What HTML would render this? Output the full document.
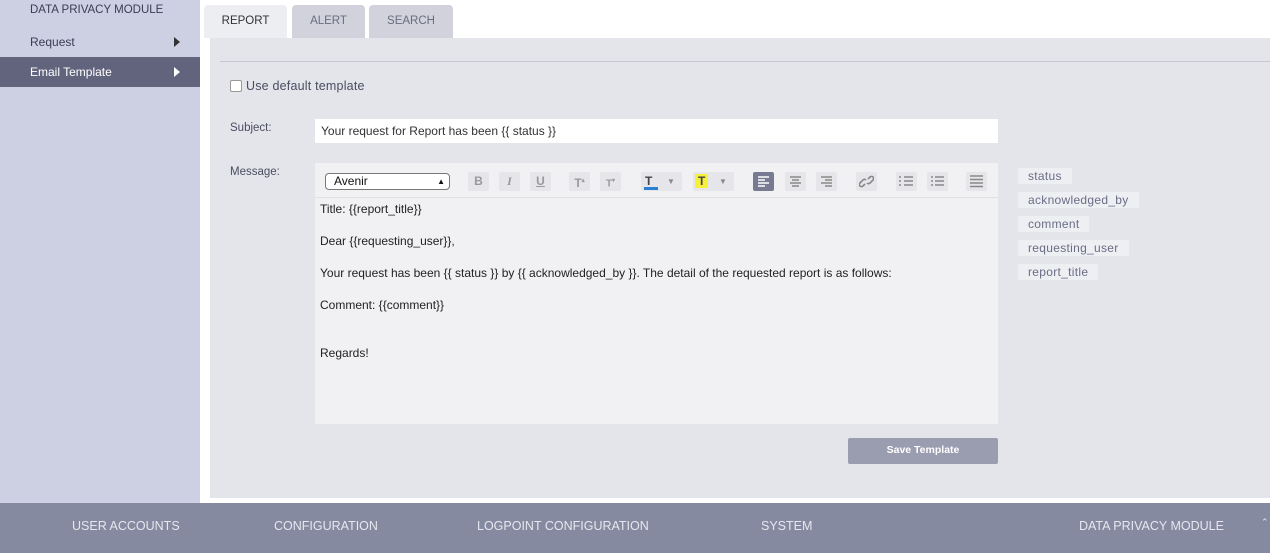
<!DOCTYPE html>
<html><head><style>
*{margin:0;padding:0;box-sizing:border-box}
body{width:1270px;height:553px;overflow:hidden;background:#fff;font-family:"Liberation Sans",sans-serif;position:relative;font-size:12px}
.abs{position:absolute}
.side{left:0;top:0;width:200px;height:503px;background:#cdcfe2}
.side .h{left:30px;top:4px;font-size:11.5px;color:#3a3d55}
.side .it{left:0;width:200px;height:30px;line-height:30px;padding-left:30px;font-size:12px;color:#3a3d55}
.tri{position:absolute;right:20px;top:10px;width:0;height:0;border-left:6px solid #333;border-top:5px solid transparent;border-bottom:5px solid transparent}
.main{left:210px;top:38px;width:1060px;height:460px;background:#e4e5ea}
.tab{top:5px;height:33px;line-height:33px;text-align:center;font-size:11.5px;border-radius:4px 4px 0 0;color:#6a6d80;background:#d1d2db}
.lbl{font-size:11.5px;color:#4a4d60}
.tag{left:1018px;height:16px;line-height:16px;padding:0 10px;background:#eeeff3;color:#6a6d85;font-size:12px;border-radius:2px;letter-spacing:0.3px}
.btn{position:absolute;top:172px;width:21px;height:19px;background:#e6e6ea;border-radius:2px;color:#999;font-size:12px;text-align:center;line-height:19px;font-weight:bold}
.btn svg{position:absolute;left:3px;top:3px}
.foot{left:0;top:503px;width:1270px;height:50px;background:#868aa0;color:#e6e7ee;font-size:12.5px}
.foot span{position:absolute;top:16px}
.msg div{position:absolute;left:320px;font-size:12px;color:#222}
</style></head><body>
<div class="abs side">
<div class="abs h">DATA PRIVACY MODULE</div>
<div class="abs it" style="top:27px">Request<span class="tri"></span></div>
<div class="abs it" style="top:57px;background:#62647e;color:#fff">Email Template<span class="tri" style="border-left-color:#fff"></span></div>
</div>
<div class="abs tab" style="left:204px;width:83px;background:#edeef2;color:#333">REPORT</div>
<div class="abs tab" style="left:292px;width:73px">ALERT</div>
<div class="abs tab" style="left:369px;width:84px">SEARCH</div>
<div class="abs main"></div>
<div class="abs" style="left:220px;top:61px;width:1050px;height:1px;background:#c8c9d0"></div>
<div class="abs" style="left:230px;top:80px;width:12px;height:12px;border:1px solid #999;background:#fff;border-radius:2px"></div>
<div class="abs" style="left:246px;top:79px;font-size:12.5px;color:#4a4d60;letter-spacing:0.2px">Use default template</div>
<div class="abs lbl" style="left:230px;top:122px">Subject:</div>
<div class="abs" style="left:315px;top:119px;width:683px;height:24px;background:#fff;font-size:12px;line-height:24px;padding-left:6px;color:#333">Your request for Report has been {{ status }}</div>
<div class="abs lbl" style="left:230px;top:166px">Message:</div>
<div class="abs" style="left:315px;top:163px;width:683px;height:261px;background:#f1f1f4"></div>
<div class="abs" style="left:315px;top:197px;width:683px;height:1px;background:#e0e0e5"></div>
<div class="abs" style="left:325px;top:173px;width:125px;height:17px;background:#fff;border:1px solid #777;border-radius:4px;font-size:12px;line-height:15px;padding-left:8px;color:#111">Avenir<span style="position:absolute;right:4px;font-size:8px">&#9650;</span></div>
<div class="btn" style="left:468px">B</div>
<div class="btn" style="left:499px;font-style:italic;font-family:'Liberation Serif'">I</div>
<div class="btn" style="left:530px;text-decoration:underline">U</div>
<div class="btn" style="left:569px">T<sup style="font-size:6px">▴</sup></div>
<div class="btn" style="left:600px;font-size:10px">T<sup style="font-size:6px">▾</sup></div>
<div class="btn" style="left:641px;width:41px;text-align:left;padding-left:4px;color:#444">T<span style="position:absolute;left:3px;bottom:1px;width:14px;height:3px;background:#2a7fd0"></span><span style="position:absolute;left:26px;font-size:8px;color:#888">▼</span></div>
<div class="btn" style="left:693px;width:41px;text-align:left;padding-left:2px;color:#444"><span style="background:#f5f03a;padding:0 3px">T</span><span style="position:absolute;left:26px;font-size:8px;color:#888">▼</span></div>
<div class="btn" style="left:753px;background:#777a90"><svg width="15" height="13" stroke="#fff" stroke-width="1.5"><path d="M2 2h11M2 5h7M2 8h11M2 11h7"/></svg></div>
<div class="btn" style="left:785px"><svg width="15" height="13" stroke="#888" stroke-width="1.5"><path d="M2 2h11M4 5h7M2 8h11M4 11h7"/></svg></div>
<div class="btn" style="left:816px"><svg width="15" height="13" stroke="#888" stroke-width="1.5"><path d="M2 2h11M6 5h7M2 8h11M6 11h7"/></svg></div>
<div class="btn" style="left:856px"><svg width="15" height="13" stroke="#888" stroke-width="1.6" fill="none"><path d="M6 9l-2 2a2 2 0 0 1-3-3l3-3a2 2 0 0 1 3 0M9 4l2-2a2 2 0 0 1 3 3l-3 3a2 2 0 0 1-3 0"/></svg></div>
<div class="btn" style="left:896px"><svg width="15" height="13" stroke="#888" stroke-width="1.5"><path d="M5 2h9M5 6h9M5 10h9M1 1v2M1 5v2M1 9v2"/></svg></div>
<div class="btn" style="left:927px"><svg width="15" height="13" stroke="#888" stroke-width="1.5"><path d="M5 2h9M5 6h9M5 10h9M1 2h2M1 6h2M1 10h2"/></svg></div>
<div class="btn" style="left:966px"><svg width="15" height="13" stroke="#888" stroke-width="1.5"><path d="M1 1h13M1 4.5h13M1 8h13M1 11.5h13"/></svg></div>
<div class="msg">
<div style="top:202px">Title: {{report_title}}</div>
<div style="top:234px">Dear {{requesting_user}},</div>
<div style="top:266px">Your request has been {{ status }} by {{ acknowledged_by }}. The detail of the requested report is as follows:</div>
<div style="top:298px">Comment: {{comment}}</div>
<div style="top:346px">Regards!</div>
</div>
<div class="abs tag" style="top:168px">status</div>
<div class="abs tag" style="top:192px">acknowledged_by</div>
<div class="abs tag" style="top:216px">comment</div>
<div class="abs tag" style="top:240px">requesting_user</div>
<div class="abs tag" style="top:264px">report_title</div>
<div class="abs" style="left:848px;top:438px;width:150px;height:26px;background:#9a9cb0;border-radius:2px;color:#fff;font-size:10.5px;text-align:center;line-height:24px;font-weight:bold">Save Template</div>
<div class="abs foot">
<span style="left:72px">USER ACCOUNTS</span>
<span style="left:274px">CONFIGURATION</span>
<span style="left:477px">LOGPOINT CONFIGURATION</span>
<span style="left:761px">SYSTEM</span>
<span style="left:1079px">DATA PRIVACY MODULE</span>
<span style="left:1261px;top:14px;font-size:9px">⌃</span>
</div>
</body></html>
